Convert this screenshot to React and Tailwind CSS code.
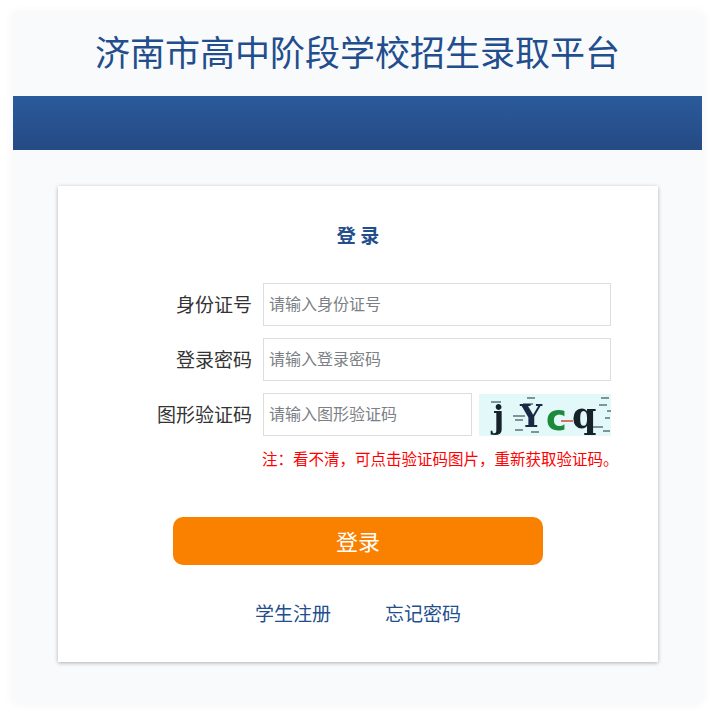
import React from 'react';

const FONT = "font-['Noto_Sans_CJK_SC','Noto_Sans',sans-serif]";

const Captcha = () => (
  <svg width="132" height="42" viewBox="0 0 132 42" className="block shrink-0 bg-[#e3f9f9]">
    <defs>
      <filter id="soft" x="-5%" y="-5%" width="110%" height="110%">
        <feGaussianBlur stdDeviation="0.6" />
      </filter>
    </defs>
    <g filter="url(#soft)">
      <g stroke="#3f5f60" strokeWidth="1.4" opacity="0.85">
        <path d="M12 8h10M48 4h8M44 10h10M122 4h8M120 11h8M34 22h12M36 26h8M36 36h8M52 38h8M112 33h12M126 24h5M128 17h4M124 37h7" />
      </g>
      <text x="14" y="34" fontFamily="DejaVu Serif" fontWeight="700" fontSize="31" fill="#14202a">j</text>
      <text x="41" y="33" fontFamily="DejaVu Serif" fontWeight="700" fontSize="31" fill="#182a44">Y</text>
      <text x="67" y="36" fontFamily="DejaVu Sans" fontWeight="700" fontSize="35" fill="#1f8a3a">c</text>
      <text x="93" y="34" fontFamily="DejaVu Serif" fontWeight="700" fontSize="35" fill="#14202c">q</text>
      <path d="M82 27h12" stroke="#cc4a3c" strokeWidth="1.5" />
    </g>
  </svg>
);

const Field = ({ label, placeholder, wide, children }) => (
  <div className="flex items-center h-[43px]">
    <label className="w-[205px] text-right text-[19px] text-[#333] leading-none pr-[11px] pb-[2px]">{label}</label>
    <input
      placeholder={placeholder}
      className={`${wide ? 'w-[348px]' : 'w-[209px]'} h-[43px] border border-[#ddd] bg-white pl-[5px] pr-[6px] pb-[3px] text-[16px] outline-none placeholder:text-[#7c7f85]`}
    />
    {children}
  </div>
);

export default function App() {
  return (
    <div className={`${FONT} min-h-[716px] bg-white pt-[13px] pl-[13px]`}>
      <div className="w-[689px] h-[690px] bg-[#f9fafc] shadow-[0_0_10px_rgba(0,0,0,0.06)]">
        <h1 className="h-[83px] flex items-center justify-center pb-[9px] text-[35px] font-normal text-[#234e8d] leading-none">
          济南市高中阶段学校招生录取平台
        </h1>
        <div className="h-[54px] bg-gradient-to-b from-[#2b5a9b] to-[#254a84]" />

        <div className="mt-[36px] ml-[45px] w-[600px] h-[476px] bg-white shadow-[0_1px_4px_rgba(0,0,0,0.3)]">
          <h2 className="pt-[36px] h-[97px] text-center text-[19px] font-bold text-[#234e8d] leading-[26px]">登 录</h2>
          <div className="flex flex-col gap-[12px]">
            <Field label="身份证号" placeholder="请输入身份证号" wide />
            <Field label="登录密码" placeholder="请输入登录密码" wide />
            <Field label="图形验证码" placeholder="请输入图形验证码">
              <div className="ml-[7px]">
                <Captcha />
              </div>
            </Field>
          </div>
          <p className="mt-[11px] ml-[204px] text-[15.5px] leading-[22px] text-[#f00] whitespace-nowrap">
            注：看不清，可点击验证码图片，重新获取验证码。
          </p>
          <button className="block mt-[48px] ml-[115px] w-[370px] h-[48px] pb-[2px] rounded-[10px] bg-[#fa8000] text-white text-[22px] leading-none">
            登录
          </button>
          <div className="mt-[34px] flex justify-center gap-[54px] text-[19px] leading-[28px] text-[#234e8d]">
            <a>学生注册</a>
            <a>忘记密码</a>
          </div>
        </div>
      </div>
    </div>
  );
}
